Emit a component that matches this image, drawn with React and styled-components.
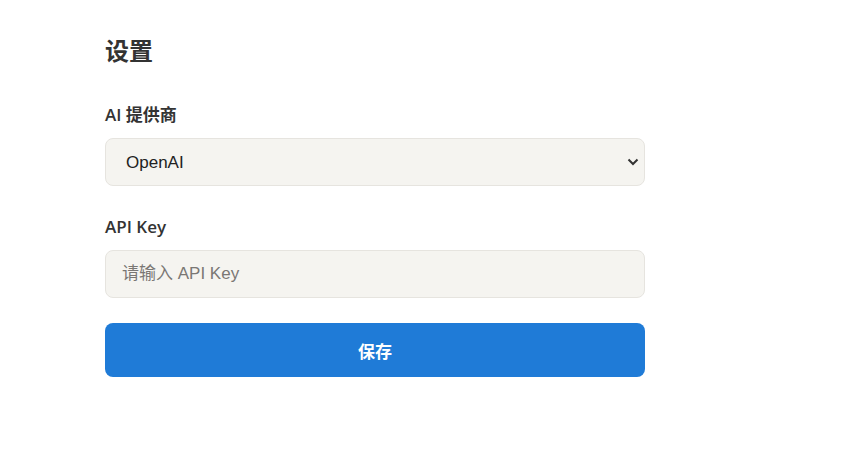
import React, {useState} from 'react';
import styled, {createGlobalStyle} from 'styled-components';

const GlobalStyle = createGlobalStyle`
    html, body {
        margin: 0;
        padding: 0;
        background: #ffffff;
    }
    body {
        font-family: "Liberation Sans", "Noto Sans CJK SC", sans-serif;
        color: #333333;
    }
`

const Page = styled.div`
    width: 540px;
    padding: 34px 0 0 105px;
`

const Title = styled.h1`
    margin: 0 0 33px;
    font-size: 24px;
    font-weight: 700;
    line-height: 36px;
    color: #333333;
`

const Field = styled.div`
    display: flex;
    flex-direction: column;
    margin-bottom: ${props => props.gap || 26}px;
`

const Label = styled.label`
    font-family: "Open Sans", "Noto Sans CJK SC", sans-serif;
    font-size: 17px;
    font-weight: 600;
    line-height: 24px;
    margin-bottom: 11px;
    color: #333333;
`

const SelectWrap = styled.div`
    position: relative;
`

const Select = styled.select`
    width: 100%;
    height: 48px;
    box-sizing: border-box;
    padding: 0 40px 0 20px;
    appearance: none;
    border: 1px solid #e6e4df;
    border-radius: 8px;
    background: #f5f4f0;
    font-family: "Liberation Sans", "Noto Sans CJK SC", sans-serif;
    font-size: 17px;
    color: #222222;
    outline: none;
`

const Chevron = styled.svg`
    position: absolute;
    right: 6px;
    top: 19px;
    pointer-events: none;
`

const Input = styled.input`
    width: 100%;
    height: 48px;
    box-sizing: border-box;
    padding: 0 16px;
    border: 1px solid #e6e4df;
    border-radius: 8px;
    background: #f5f4f0;
    font-family: "Liberation Sans", "Noto Sans CJK SC", sans-serif;
    font-size: 17px;
    color: #222222;
    outline: none;

    &::placeholder {
        color: #7a7774;
    }
`

const SaveButton = styled.button`
    width: 100%;
    height: 54px;
    border: none;
    border-radius: 8px;
    background: #1f7bd7;
    color: #ffffff;
    font-family: "Liberation Sans", "Noto Sans CJK SC", sans-serif;
    font-size: 17px;
    font-weight: 700;
    cursor: pointer;
`

const App = () => {
    const [provider, setProvider] = useState('openai');
    const [apiKey, setApiKey] = useState('');

    return (
        <>
            <GlobalStyle/>
            <Page>
                <Title>设置</Title>
                <Field gap={29}>
                    <Label>AI 提供商</Label>
                    <SelectWrap>
                        <Select value={provider} onChange={e => setProvider(e.target.value)}>
                            <option value="openai">OpenAI</option>
                            <option value="anthropic">Anthropic</option>
                        </Select>
                        <Chevron width="12" height="10" viewBox="0 0 12 10">
                            <path d="M1.5 2.5 L6 7 L10.5 2.5" fill="none" stroke="#333" strokeWidth="2"/>
                        </Chevron>
                    </SelectWrap>
                </Field>
                <Field gap={25}>
                    <Label>API Key</Label>
                    <Input value={apiKey} onChange={e => setApiKey(e.target.value)} placeholder="请输入 API Key"/>
                </Field>
                <SaveButton>保存</SaveButton>
            </Page>
        </>
    );
}

export default App;
